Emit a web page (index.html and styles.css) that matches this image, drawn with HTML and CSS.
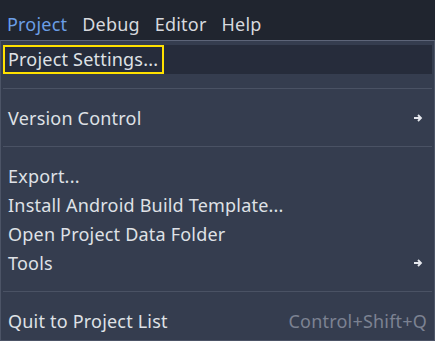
FILE: index.html
```html
<!DOCTYPE html>
<html lang="en">
<head>
  <meta charset="UTF-8">
  <title>Project Menu</title>
  <link rel="stylesheet" href="styles.css">
</head>
<body>

  <!-- Menu Bar -->
  <div class="menubar">
    <span class="menu active">Project</span>
    <span class="menu">Debug</span>
    <span class="menu">Editor</span>
    <span class="menu">Help</span>
  </div>

  <!-- Popup -->
  <div class="popup">
    <div class="item hover"><span class="focus">Project Settings...</span></div>
    <div class="sep"></div>
    <div class="item">Version Control
      <svg class="arrow" width="10" height="10" viewBox="0 0 10 10"><path d="M1 5h6.5M5 2l3 3-3 3" fill="none" stroke="#e6e8ee" stroke-width="1.8"/></svg>
    </div>
    <div class="sep"></div>
    <div class="item">Export...</div>
    <div class="item">Install Android Build Template...</div>
    <div class="item">Open Project Data Folder</div>
    <div class="item">Tools
      <svg class="arrow" width="10" height="10" viewBox="0 0 10 10"><path d="M1 5h6.5M5 2l3 3-3 3" fill="none" stroke="#e6e8ee" stroke-width="1.8"/></svg>
    </div>
    <div class="sep"></div>
    <div class="item">Quit to Project List <span class="shortcut">Control+Shift+Q</span></div>
  </div>

</body>
</html>
```
FILE: styles.css
```css
body { margin: 0; width: 435px; height: 341px; overflow: hidden; background-color: #20252f; font-family: "Noto Sans", sans-serif; font-size: 18px; letter-spacing: 0.2px; color: #dfe1e6; }
.menubar { height: 40px; display: flex; align-items: center; padding-top: 7px; box-sizing: border-box; background-color: #20252f; }
.menu { padding: 0 8px 0 7px; margin-right: 0; color: #d7d9de; }
.menu.active { color: #6b9ee6; }
.popup { height: 291px; background-color: #353d4f; border: 1px solid #4c5466; border-top-color: #5d6579; padding: 4px 2px; }
.item { height: 29px; display: flex; align-items: center; justify-content: space-between; padding: 0 9px 0 5px; }
.item.hover { background-color: #262c3b; padding-left: 0; }
.focus { height: 25px; display: flex; align-items: center; padding: 0 4px 0 3px; border: 2px solid #ffe100; margin-top: -1px; }
.sep { height: 29px; display: flex; align-items: center; }
.sep::before { content: ""; flex: 1; height: 1px; background-color: #4a5264; }
.shortcut { color: #7c8292; margin-right: -4px; }
```
